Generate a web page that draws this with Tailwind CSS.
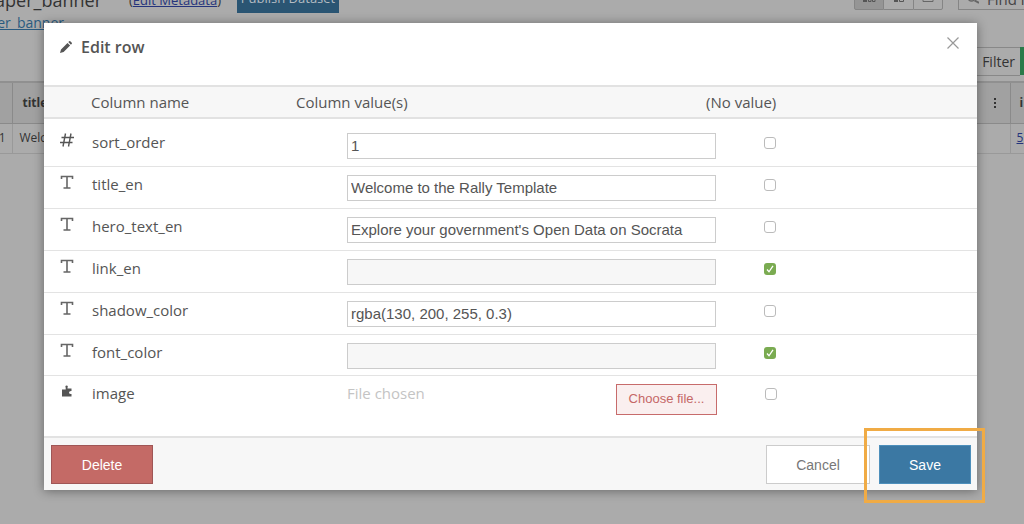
<!DOCTYPE html>
<html lang="en">
<head>
    <meta charset="UTF-8">
    <meta name="viewport" content="width=device-width, initial-scale=1.0">
    <title>Edit row</title>
    <script src="https://cdn.jsdelivr.net/npm/@tailwindcss/browser@4"></script>
</head>
<body class="relative h-screen overflow-hidden bg-[#ababab] font-['Open_Sans',sans-serif] text-[15px] text-[#555]">
    <!-- Dataset page behind the dialog -->
    <div class="flex h-screen flex-col overflow-hidden">
        <header class="flex h-[13px] shrink-0 items-end justify-between">
            <div class="flex items-end">
                <h1 class="mr-[27px] flex w-[102px] justify-end pb-[4px] text-[18px] leading-[18px] whitespace-nowrap text-[#333]">aper_banner</h1>
                <span class="w-[108px] pb-[4px] text-[13px] leading-[18px] text-[#333]">(<a href="#" class="text-[#25347c] underline">Edit Metadata</a>)</span>
                <button class="w-[102px] bg-[#2a5573] pb-[5px] text-[13px] leading-5 text-[#b5bcc2]">Publish Dataset</button>
            </div>
            <div class="flex items-end gap-[15px] pb-[3px]">
                <div class="flex">
                    <button aria-label="Table view" class="flex h-5 w-[30px] items-end justify-center rounded-bl-xs border border-[#858585] bg-[#959595] pb-[6px]">
                        <svg class="h-3 w-4" viewBox="0 0 16 12"><path d="M2 1h4v10H2z" fill="#555"/><path d="M7.500 4.500h2.500v6H7.500zM11.500 4.500h2.500v6h-2.500z" fill="none" stroke="#555"/></svg>
                    </button>
                    <button aria-label="Card view" class="flex h-5 w-[29px] items-end justify-center border-y border-[#858585] pb-[6px]">
                        <svg class="h-3 w-4" viewBox="0 0 16 12"><path d="M3 3h4v8H3z" fill="#555"/><path d="M8.500 1.500h4v9h-4z" fill="none" stroke="#555"/></svg>
                    </button>
                    <button aria-label="Row view" class="flex h-5 w-[30px] items-end justify-center rounded-br-xs border border-[#858585] pb-[6px]">
                        <svg class="h-3 w-4" viewBox="0 0 16 12"><path d="M3 1h10v9.500H3z" fill="none" stroke="#666"/></svg>
                    </button>
                </div>
                <div class="flex h-5 w-[66px] items-end gap-2 border border-r-0 border-[#858585] pl-2">
                    <svg class="mb-[5px] h-3 w-3 shrink-0" viewBox="0 0 12 12"><path d="M7.500 8.500L12 11" fill="none" stroke="#666" stroke-width="2"/><circle cx="4.500" cy="5.500" r="3.500" fill="none" stroke="#666" stroke-width="1.500"/></svg>
                    <input aria-label="Find in this dataset" class="mb-px w-full min-w-0 text-[15px] leading-[18px] text-[#444]" value="Find in this dataset">
                </div>
            </div>
        </header>
        <div class="h-[34px] shrink-0">
            <a href="#" class="flex w-[64px] justify-end text-[14px] leading-5 whitespace-nowrap text-[#2a5b80] underline">er_banner</a>
        </div>
        <div class="flex h-[34px] shrink-0 items-start justify-end">
            <button class="h-[29px] w-[52px] border-y border-[#888] pr-[5px] text-right text-[14px] leading-5 text-[#333]">Filter</button>
            <div class="h-[28px] w-1 bg-[#2a7a49]"></div>
        </div>
        <table class="w-full table-fixed border-t-2 border-[#909090] text-[12px] text-[#333]">
            <thead>
                <tr class="h-[41px] border-b border-[#8a8a8a] bg-[#a1a1a1] text-left">
                    <th class="w-[12px] border-r border-[#8a8a8a]"></th>
                    <th class="pl-[10px]">title</th>
                    <th class="w-[39px] border-r border-[#8a8a8a] pl-[22px]">
                        <button aria-label="Column menu" class="block">
                            <svg class="h-3 w-1" viewBox="0 0 4 12"><path d="M1 1h2v2H1zM1 5h2v2H1zM1 9h2v2H1z" fill="#333"/></svg>
                        </button>
                    </th>
                    <th class="w-[14px] pl-[9px]">i</th>
                </tr>
            </thead>
            <tbody>
                <tr class="h-[30px] border-b border-[#999]">
                    <td class="border-r border-[#999] pr-[6px]"><span class="flex justify-end">1</span></td>
                    <td class="pl-[7px]">Welcome</td>
                    <td class="border-r border-[#999]"></td>
                    <td class="pl-[6px]"><a href="#" class="text-[#25347c] underline">5</a></td>
                </tr>
            </tbody>
        </table>
    </div>

    <!-- Edit row dialog -->
    <div role="dialog" aria-labelledby="dialogTitle" class="absolute inset-x-0 top-[23px] mr-[47px] ml-[44px] bg-white shadow-[0_1px_10px_rgba(0,0,0,0.4)]">
        <div class="flex h-[62px] items-start justify-between pt-3 pr-[18px] pl-4">
            <div class="flex items-center gap-[9px]">
                <svg class="h-3 w-3" viewBox="0 0 12 12" fill="#555"><path d="M0 12l1-3.600 6.500-6.500 2.600 2.600L3.600 11zM8.300 1.100L9.200.2q.6-.4 1.100 0l1.500 1.500q.4.500 0 1.100l-.9.900z"/></svg>
                <h2 id="dialogTitle" class="text-[16px] leading-6 font-semibold">Edit row</h2>
            </div>
            <button aria-label="Close" class="mt-[2px]">
                <svg class="h-3 w-3" viewBox="0 0 12 12"><path d="M.5.5l11 11M11.500.5l-11 11" stroke="#999" stroke-width="1.200"/></svg>
            </button>
        </div>

        <table class="w-full table-fixed text-left">
            <thead>
                <tr class="h-[32px] border-y-2 border-[#e2e2e2] bg-[#f7f7f7] text-[15px]">
                    <th class="w-[47px]"></th>
                    <th class="w-[205px] font-normal">Column name</th>
                    <th class="w-[410px] font-normal">Column value(s)</th>
                    <th class="font-normal">(No value)</th>
                </tr>
            </thead>
            <tbody>
                <tr class="h-12 border-b border-[#e3e3e3] align-top">
                    <td class="pt-[14px] pl-4"><svg class="h-[14px] w-[14px]" viewBox="0 0 14 14"><path d="M5.500.5L3 13.500M11 .5L8.500 13.500M1.500 4.500H14M0 9.500h12.500" fill="none" stroke="#555" stroke-width="1.400"/></svg></td>
                    <td class="pt-3 pl-px"><label for="sortOrder">sort_order</label></td>
                    <td class="pt-[14px] pl-[51px]"><input id="sortOrder" class="block h-[26px] w-[369px] max-w-none border border-[#ccc] px-[3px] pb-px font-['Liberation_Sans',sans-serif] text-[15px]" value="1"></td>
                    <td class="pt-[18px] pl-[58px]"><input type="checkbox" aria-label="No value for sort_order" class="block h-3 w-3 appearance-none rounded-[3px] border border-[#bbb]"></td>
                </tr>
                <tr class="h-[42px] border-b border-[#e3e3e3] align-top">
                    <td class="pt-2 pl-4"><svg class="h-[14px] w-[14px]" viewBox="0 0 14 14"><path d="M1.500 4V1.500h11V4M7 1.500v11.500M3.500 13h7" fill="none" stroke="#666" stroke-width="1.600"/></svg></td>
                    <td class="pt-[6px] pl-px"><label for="titleEn">title_en</label></td>
                    <td class="pt-2 pl-[51px]"><input id="titleEn" class="block h-[26px] w-[369px] max-w-none border border-[#ccc] px-[3px] pb-px font-['Liberation_Sans',sans-serif] text-[15px]" value="Welcome to the Rally Template"></td>
                    <td class="pt-3 pl-[58px]"><input type="checkbox" aria-label="No value for title_en" class="block h-3 w-3 appearance-none rounded-[3px] border border-[#bbb]"></td>
                </tr>
                <tr class="h-[42px] border-b border-[#e3e3e3] align-top">
                    <td class="pt-2 pl-4"><svg class="h-[14px] w-[14px]" viewBox="0 0 14 14"><path d="M1.500 4V1.500h11V4M7 1.500v11.500M3.500 13h7" fill="none" stroke="#666" stroke-width="1.600"/></svg></td>
                    <td class="pt-[6px] pl-px"><label for="heroTextEn">hero_text_en</label></td>
                    <td class="pt-2 pl-[51px]"><input id="heroTextEn" class="block h-[26px] w-[369px] max-w-none border border-[#ccc] px-[3px] pb-px font-['Liberation_Sans',sans-serif] text-[15px]" value="Explore your government's Open Data on Socrata"></td>
                    <td class="pt-3 pl-[58px]"><input type="checkbox" aria-label="No value for hero_text_en" class="block h-3 w-3 appearance-none rounded-[3px] border border-[#bbb]"></td>
                </tr>
                <tr class="h-[42px] border-b border-[#e3e3e3] align-top">
                    <td class="pt-2 pl-4"><svg class="h-[14px] w-[14px]" viewBox="0 0 14 14"><path d="M1.500 4V1.500h11V4M7 1.500v11.500M3.500 13h7" fill="none" stroke="#666" stroke-width="1.600"/></svg></td>
                    <td class="pt-[6px] pl-px"><label for="linkEn">link_en</label></td>
                    <td class="pt-2 pl-[51px]"><input id="linkEn" disabled class="block h-[26px] w-[369px] max-w-none border border-[#ccc] bg-[#f7f7f7] px-[3px] font-['Liberation_Sans',sans-serif] text-[15px]"></td>
                    <td class="pt-3 pl-[58px]">
                        <div class="relative h-3 w-3">
                            <input type="checkbox" checked aria-label="No value for link_en" class="block h-3 w-3 appearance-none rounded-[3px] bg-[#7aab51]">
                            <svg class="pointer-events-none absolute inset-0 h-3 w-3" viewBox="0 0 12 12"><path d="M3 6.500l2 2.300 4-6" fill="none" stroke="#fff" stroke-width="1.300"/></svg>
                        </div>
                    </td>
                </tr>
                <tr class="h-[42px] border-b border-[#e3e3e3] align-top">
                    <td class="pt-2 pl-4"><svg class="h-[14px] w-[14px]" viewBox="0 0 14 14"><path d="M1.500 4V1.500h11V4M7 1.500v11.500M3.500 13h7" fill="none" stroke="#666" stroke-width="1.600"/></svg></td>
                    <td class="pt-[6px] pl-px"><label for="shadowColor">shadow_color</label></td>
                    <td class="pt-2 pl-[51px]"><input id="shadowColor" class="block h-[26px] w-[369px] max-w-none border border-[#ccc] px-[3px] pb-px font-['Liberation_Sans',sans-serif] text-[15px]" value="rgba(130, 200, 255, 0.3)"></td>
                    <td class="pt-3 pl-[58px]"><input type="checkbox" aria-label="No value for shadow_color" class="block h-3 w-3 appearance-none rounded-[3px] border border-[#bbb]"></td>
                </tr>
                <tr class="h-[41px] border-b border-[#e3e3e3] align-top">
                    <td class="pt-2 pl-4"><svg class="h-[14px] w-[14px]" viewBox="0 0 14 14"><path d="M1.500 4V1.500h11V4M7 1.500v11.500M3.500 13h7" fill="none" stroke="#666" stroke-width="1.600"/></svg></td>
                    <td class="pt-[6px] pl-px"><label for="fontColor">font_color</label></td>
                    <td class="pt-2 pl-[51px]"><input id="fontColor" disabled class="block h-[26px] w-[369px] max-w-none border border-[#ccc] bg-[#f7f7f7] px-[3px] font-['Liberation_Sans',sans-serif] text-[15px]"></td>
                    <td class="pt-3 pl-[58px]">
                        <div class="relative h-3 w-3">
                            <input type="checkbox" checked aria-label="No value for font_color" class="block h-3 w-3 appearance-none rounded-[3px] bg-[#7aab51]">
                            <svg class="pointer-events-none absolute inset-0 h-3 w-3" viewBox="0 0 12 12"><path d="M3 6.500l2 2.300 4-6" fill="none" stroke="#fff" stroke-width="1.300"/></svg>
                        </div>
                    </td>
                </tr>
                <tr class="h-[61px] align-top">
                    <td class="pt-2 pl-4"><svg class="h-[14px] w-[14px]" viewBox="0 0 14 14" fill="#555"><path d="M2 5.500h3.700V3.800q-.9-2.300.9-2.300t.9 2.300V4.500H11.500V7Q9 6.800 9 8.500T11.500 10v2.500H2z"/></svg></td>
                    <td class="pt-[6px] pl-px">image</td>
                    <td class="pt-[6px] pl-[51px]">
                        <div class="flex w-[370px] items-start justify-between">
                            <span class="text-[#c4c4c4]">File chosen</span>
                            <button class="mt-[2px] h-[31px] w-[101px] border border-[#c76b6b] bg-[#faefef] font-['Liberation_Sans',sans-serif] text-[13px] text-[#c56767]">Choose file...</button>
                        </div>
                    </td>
                    <td class="pt-3 pl-[59px]"><input type="checkbox" aria-label="No value for image" class="block h-3 w-3 appearance-none rounded-[3px] border border-[#bbb]"></td>
                </tr>
            </tbody>
        </table>

        <div class="flex items-center justify-between border-t-2 border-[#e2e2e2] bg-[#f7f7f7] pt-[7px] pr-[6px] pb-[6px] pl-[7px] font-['Liberation_Sans',sans-serif]">
            <button class="h-[39px] w-[102px] border border-[#9f5656] bg-[#c46a66] pt-px text-[14px] text-white">Delete</button>
            <div class="flex gap-[9px]">
                <button class="h-[39px] w-[104px] border border-[#ccc] bg-white pt-px text-[14px] text-[#777]">Cancel</button>
                <div class="relative">
                    <button class="h-[39px] w-[92px] border border-[#4d8fbb] bg-[#3b78a3] pt-px text-[14px] text-white">Save</button>
                    <!-- highlight around the save button -->
                    <div class="pointer-events-none absolute -top-[17px] -right-[14px] -bottom-[19px] -left-[15px] border-[3px] border-[#f0ab45]"></div>
                </div>
            </div>
        </div>
    </div>
</body>
</html>
